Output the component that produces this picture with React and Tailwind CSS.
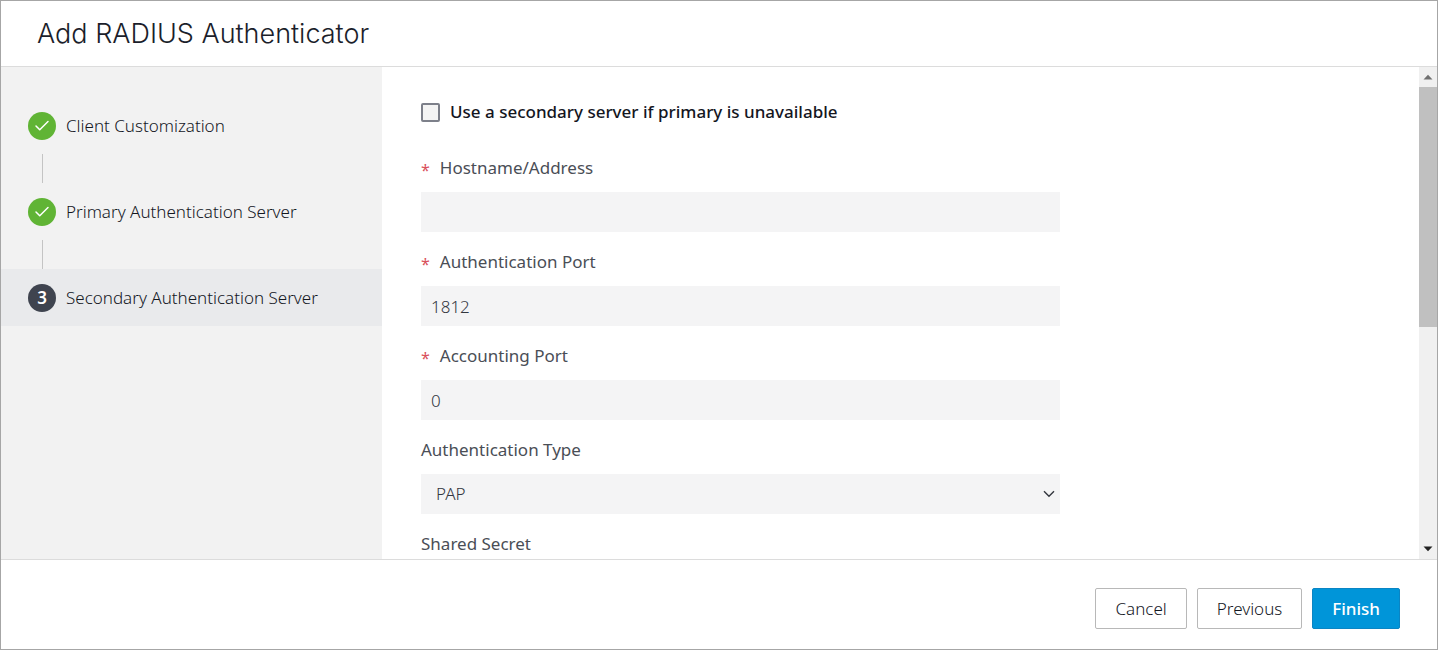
import { Check } from "lucide-react";

const steps = [
  { label: "Client Customization", done: true },
  { label: "Primary Authentication Server", done: true },
  { label: "Secondary Authentication Server", done: false },
];

function Step({ step, number }) {
  return (
    <li>
      {number > 1 && <div className="ml-[41px] h-[29px] w-px bg-[#c4c4c4]" />}
      <div
        aria-current={step.done ? undefined : "step"}
        className={
          step.done
            ? "flex h-[57px] items-center gap-[10px] pl-[27px]"
            : "flex h-[57px] items-center gap-[10px] bg-[#e9eaec] pl-[27px]"
        }
      >
        {step.done ? (
          <span className="flex size-7 shrink-0 items-center justify-center rounded-full bg-[#60b435] text-white">
            <Check size={18} strokeWidth={2} aria-hidden="true" />
          </span>
        ) : (
          <span className="flex size-7 shrink-0 items-center justify-center rounded-full bg-[#3f444f] text-[17px] leading-6 font-semibold text-white">
            {number}
          </span>
        )}
        <span className="text-[17px] leading-6 font-[350]">{step.label}</span>
      </div>
    </li>
  );
}

function Field({ id, label, required, children }) {
  return (
    <div>
      <label htmlFor={id} className="mb-3 flex h-6 items-center gap-[10px] text-[17px] leading-6 text-[#4a4e56]">
        {required && <span className="pt-1 text-base text-[#d9505c]">*</span>}
        <span>{label}</span>
      </label>
      {children}
    </div>
  );
}

const inputClass =
  "block h-10 w-full bg-[#f4f4f5] px-[10px] text-[17px] font-light text-[#33373f] outline-none focus:ring-1 focus:ring-[#0095d9]";

const secondaryButtonClass =
  "h-[41px] rounded-[2px] border border-[#b8b8b8] px-[19px] text-[17px] font-[350]";

export default function App() {
  return (
    <div className="flex h-screen flex-col border border-[#a6a6a6] bg-white font-['Noto_Sans',sans-serif] text-[#14171f]">
      <header className="flex h-[66px] shrink-0 items-center border-b border-[#dcdcdc] px-9">
        <h1 className="font-['Inter',sans-serif] text-[27px] leading-9 font-light text-[#1b1e2b]">
          Add RADIUS Authenticator
        </h1>
      </header>

      <div className="flex min-h-0 flex-1">
        <nav aria-label="Steps" className="w-[381px] shrink-0 bg-[#f2f2f2] pt-[30px]">
          <ol>
            {steps.map((step, i) => (
              <Step key={step.label} step={step} number={i + 1} />
            ))}
          </ol>
        </nav>

        <main className="min-w-0 flex-1 overflow-y-auto pt-[33px] pl-[39px] [scrollbar-width:none]">
          <form id="secondary-server" className="w-full max-w-[639px] pb-8">
            <label className="mb-8 flex h-6 items-center gap-[10px] text-[17px] leading-6 font-medium text-[#14161f]">
              <input
                type="checkbox"
                className="size-[19px] appearance-none rounded-[2px] border-2 border-[#7d808a] bg-[#f4f4f4] checked:bg-[#0095d9]"
              />
              Use a secondary server if primary is unavailable
            </label>

            <div className="flex flex-col gap-[18px]">
              <Field id="host" label="Hostname/Address" required>
                <input id="host" type="text" className={inputClass} />
              </Field>
              <Field id="auth-port" label="Authentication Port" required>
                <input id="auth-port" type="text" defaultValue="1812" className={inputClass} />
              </Field>
              <Field id="acct-port" label="Accounting Port" required>
                <input id="acct-port" type="text" defaultValue="0" className={inputClass} />
              </Field>
              <Field id="auth-type" label="Authentication Type">
                <div className="grid items-center">
                  <select
                    id="auth-type"
                    className="col-start-1 row-start-1 h-10 w-full appearance-none bg-[#f4f4f5] px-[15px] text-[17px] font-light text-[#33373f] outline-none"
                  >
                    <option>PAP</option>
                  </select>
                  <svg
                    aria-hidden="true"
                    viewBox="0 0 12 8"
                    className="pointer-events-none col-start-1 row-start-1 mr-[5px] h-2 w-3 justify-self-end"
                    fill="none"
                    stroke="#33363e"
                    strokeWidth="1.4"
                  >
                    <path d="M1 1.2 6 6.2 11 1.2" />
                  </svg>
                </div>
              </Field>
              <Field id="secret" label="Shared Secret">
                <input id="secret" type="password" className={inputClass} />
              </Field>
            </div>
          </form>
        </main>

        <div aria-hidden="true" className="flex w-[18px] shrink-0 flex-col bg-[#f0f0f0]">
          <div className="flex h-5 items-center justify-center">
            <svg viewBox="0 0 10 6" className="h-[6px] w-[10px]">
              <path d="M0.5 5.5 5 0.8 9.5 5.5Z" fill="#707070" />
            </svg>
          </div>
          <div className="flex-1">
            <div className="h-[53%] bg-[#c0c0c0]" />
          </div>
          <div className="flex h-5 items-center justify-center">
            <svg viewBox="0 0 10 6" className="h-[6px] w-[10px]">
              <path d="M0.5 0.5 5 5.2 9.5 0.5Z" fill="#222" />
            </svg>
          </div>
        </div>
      </div>

      <footer className="flex shrink-0 justify-end gap-[10px] border-t border-[#dcdcdc] pt-7 pr-[37px] pb-5">
        <button type="button" className={secondaryButtonClass}>
          Cancel
        </button>
        <button type="button" className={secondaryButtonClass}>
          Previous
        </button>
        <button
          type="submit"
          form="secondary-server"
          className="h-[41px] rounded-[2px] border border-[#0a85c4] bg-[#0095d9] px-[19px] text-[17px] font-medium text-white"
        >
          Finish
        </button>
      </footer>
    </div>
  );
}
